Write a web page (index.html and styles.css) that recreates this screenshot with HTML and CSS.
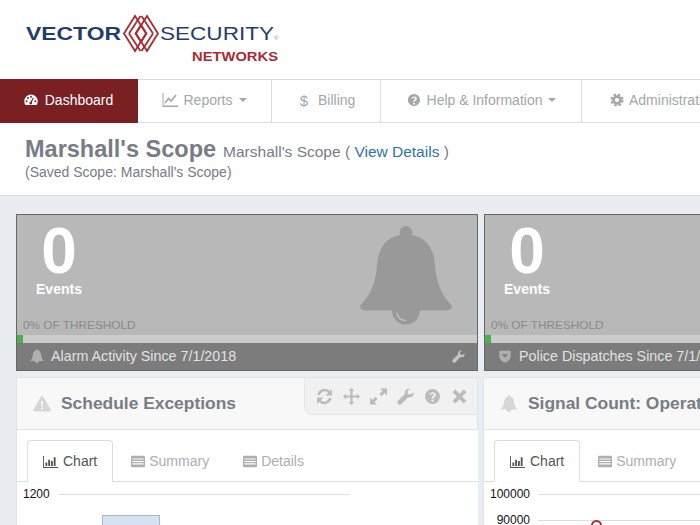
FILE: index.html
```html
<!DOCTYPE html>
<html lang="en">
<head>
  <meta charset="UTF-8" />
  <title>Vector Security Networks</title>
  <link rel="stylesheet" href="styles.css">
</head>
<body>
  <svg class="defs" width="0" height="0">
    <defs>
      <symbol id="i-bell" viewBox="0 0 92 99">
        <circle cx="46" cy="7" r="6.5" />
        <circle cx="46" cy="85" r="14" />
        <path d="M46 9C28 9 18 21 17 40 15 62 8 72 1 79c-2 3 0 6 4 6h82c4 0 6-3 4-6-7-7-14-17-16-39C74 21 64 9 46 9z" />
        <path class="bell-shine" d="M37 87c0 5 4 8 9 8" />
      </symbol>
      <symbol id="i-wrench" viewBox="0 0 16 16">
        <path d="M15.6 4.2c.3 1.900-.4 3.500-2 4.300-1.200.6-2.300.5-3.200.1L4.300 15c-.9.9-2.300.9-3.200 0s-.9-2.300 0-3.200l6.300-6.200c-.4-1.200-.2-2.500.8-3.600C9.300.8 10.800.4 12.200.8L9.700 3.300l.6 2.300 2.400.6 2.900-2z" />
      </symbol>
      <symbol id="i-gauge" viewBox="0 0 16 16">
        <path d="M8 1.800A7.700 7.700 0 0 0 .3 9.500c0 1.600.5 3.100 1.300 4.300h12.800c.8-1.200 1.300-2.700 1.300-4.300A7.700 7.700 0 0 0 8 1.800z" />
        <g class="holes">
          <circle cx="3" cy="9.500" r="1.100" />
          <circle cx="4.500" cy="5.800" r="1.100" />
          <circle cx="8" cy="4.300" r="1.100" />
          <circle cx="13" cy="9.500" r="1.100" />
          <circle cx="7.700" cy="11.500" r="1.500" />
          <path d="M7 11l3-5.500 1.200.6-3 5.500z" />
        </g>
      </symbol>
      <symbol id="i-line" viewBox="0 0 16 14">
        <path d="M.5 0h1v12.500H16V14H.5z" />
        <path d="M3 10l3.500-4.500 2.500 2.500 5-6" fill="none" stroke="currentColor" stroke-width="1.600" />
      </symbol>
      <symbol id="i-help" viewBox="0 0 16 16">
        <path fill-rule="evenodd" d="M8 1a7 7 0 1 0 0 14A7 7 0 0 0 8 1zM7 11h2v2H7zm0-1.200c0-2 2.200-2.200 2.200-3.400 0-.6-.5-1-1.200-1-.7 0-1.200.4-1.500 1L5.100 6.300C5.600 5 6.600 4 8.200 4c1.700 0 3 1 3 2.500 0 2-2.300 2.200-2.300 3.300z" />
      </symbol>
      <symbol id="i-cog" viewBox="0 0 16 16">
        <circle cx="8" cy="8" r="3.900" fill="none" stroke="currentColor" stroke-width="3" />
        <circle cx="8" cy="8" r="6.200" fill="none" stroke="currentColor" stroke-width="2.600" stroke-dasharray="2.900 2" />
      </symbol>
      <symbol id="i-shield" viewBox="0 0 16 16">
        <path fill-rule="evenodd" d="M1.500 2h13v6c0 4-3.500 6.500-6.500 7.500C5 14.500 1.500 12 1.500 8zM4 6l4 3.800L12 6H4z" />
      </symbol>
      <symbol id="i-warn" viewBox="0 0 18 16">
        <path fill-rule="evenodd" d="M9 .5c.5 0 .9.300 1.200.8l7.400 12.800c.5 .9 0 1.900-1.100 1.900H1.500C.4 16-.1 15 .4 14.100L7.800 1.300C8.100.8 8.500.5 9 .5zM8 5.500l.3 5.500h1.400L10 5.500zM8 12v2h2v-2z" />
      </symbol>
      <symbol id="i-refresh" viewBox="0 0 16 16">
        <path d="M2.500 6.500A5.800 5.800 0 0 1 12.600 4" fill="none" stroke="currentColor" stroke-width="2.400" />
        <path d="M15 1v6H9z" />
        <path d="M13.500 9.500A5.800 5.800 0 0 1 3.400 12" fill="none" stroke="currentColor" stroke-width="2.400" />
        <path d="M1 15V9h6z" />
      </symbol>
      <symbol id="i-move" viewBox="0 0 16 16">
        <path d="M8 0l2.600 2.800H9V7h4.200V5.400L16 8l-2.800 2.600V9H9v4.200h1.600L8 16l-2.600-2.800H7V9H2.800v1.600L0 8l2.800-2.600V7H7V2.800H5.400z" />
      </symbol>
      <symbol id="i-expand" viewBox="0 0 16 16">
        <path d="M9.500 .5H16V7l-2.200-2.200-2.900 2.900-2-2 2.900-2.900zM6.500 15.500H0V9l2.200 2.200 2.900-2.900 2 2-2.900 2.900z" />
      </symbol>
      <symbol id="i-close" viewBox="0 0 16 16">
        <path d="M4 1.500l4 4 4-4 2.500 2.500-4 4 4 4-2.500 2.500-4-4-4 4L1.500 12l4-4-4-4z" />
      </symbol>
      <symbol id="i-bars" viewBox="0 0 16 14">
        <path d="M0 1h1v11.800h15V14H0zM2.500 8h2v3.800h-2zM5.500 5h2v6.800h-2zM8.500 6.500h2v5.300h-2zM11.500 2.500h2v9.300h-2z" />
      </symbol>
      <symbol id="i-list" viewBox="0 0 16 14">
        <path fill-rule="evenodd" d="M1.500 .5h13c.8 0 1.500.7 1.500 1.500v10c0 .8-.7 1.500-1.500 1.500h-13C.7 13.500 0 12.800 0 12V2C0 1.200 .7 .5 1.500 .5zM1.500 3.500v1.300h13V3.500zm0 2.800v1.300h13V6.300zm0 2.800v1.300h13V9.100z" />
      </symbol>
    </defs>
  </svg>

  <header class="brand">
    <svg class="logo" width="270" height="60" viewBox="0 0 270 60">
      <text class="logo-vector" x="11" y="30" textLength="95" lengthAdjust="spacingAndGlyphs">VECTOR</text>
      <g class="logo-mark">
        <path d="M109 23.500 L120 6 L131 23.500 L120 41z" />
        <path d="M121 23.500 L132 6 L143 23.500 L132 41z" />
        <path d="M114 23.500 L125.500 6 M114 23.500 L125.500 41 M138 23.500 L126.500 6 M138 23.500 L126.500 41" />
        <path d="M120.500 23.500 L126 15 L131.500 23.500 L126 32z" />
      </g>
      <text class="logo-security" x="145" y="30" textLength="114" lengthAdjust="spacingAndGlyphs">SECURITY</text>
      <text class="logo-reg" x="259" y="30">®</text>
      <text class="logo-networks" x="177" y="51" textLength="86" lengthAdjust="spacingAndGlyphs">NETWORKS</text>
    </svg>
  </header>

  <nav class="topnav">
    <a class="nav-item active nav-dash"><svg class="ico"><use href="#i-gauge" /></svg>Dashboard</a>
    <a class="nav-item nav-reports"><svg class="ico"><use href="#i-line" /></svg>Reports<span class="caret"></span></a>
    <a class="nav-item nav-billing"><span class="dollar">$</span>Billing</a>
    <a class="nav-item nav-help"><svg class="ico"><use href="#i-help" /></svg>Help &amp; Information<span class="caret"></span></a>
    <a class="nav-item nav-admin"><svg class="ico"><use href="#i-cog" /></svg>Administration<span class="caret"></span></a>
  </nav>

  <section class="scope">
    <div class="scope-line">
      <h1>Marshall's Scope</h1>
      <span class="scope-sub">Marshall's Scope ( <a class="link">View Details</a> )</span>
    </div>
    <div class="scope-saved">(Saved Scope: Marshall's Scope)</div>
  </section>

  <main class="content">
    <div class="row stats">
      <div class="stat">
        <svg class="stat-bg"><use href="#i-bell" /></svg>
        <div class="stat-top">
          <div class="stat-num">0</div>
          <div class="stat-label">Events</div>
        </div>
        <div class="stat-threshold">0% OF THRESHOLD</div>
        <div class="progress"><div class="progress-fill"></div></div>
        <div class="stat-foot">
          <svg class="ico-sm"><use href="#i-bell" /></svg>
          <span class="foot-text">Alarm Activity Since 7/1/2018</span>
          <svg class="ico-wrench"><use href="#i-wrench" /></svg>
        </div>
      </div>
      <div class="stat">
        <div class="stat-top">
          <div class="stat-num">0</div>
          <div class="stat-label">Events</div>
        </div>
        <div class="stat-threshold">0% OF THRESHOLD</div>
        <div class="progress"><div class="progress-fill"></div></div>
        <div class="stat-foot">
          <svg class="ico-sm"><use href="#i-shield" /></svg>
          <span class="foot-text">Police Dispatches Since 7/1/2018</span>
        </div>
      </div>
    </div>

    <div class="row widgets">
      <div class="widget">
        <div class="widget-head">
          <svg class="widget-ico"><use href="#i-warn" /></svg>
          <h2>Schedule Exceptions</h2>
          <div class="toolbar">
            <svg class="tool"><use href="#i-refresh" /></svg>
            <svg class="tool"><use href="#i-move" /></svg>
            <svg class="tool"><use href="#i-expand" /></svg>
            <svg class="tool"><use href="#i-wrench" /></svg>
            <svg class="tool"><use href="#i-help" /></svg>
            <svg class="tool"><use href="#i-close" /></svg>
          </div>
        </div>
        <div class="tabs">
          <a class="tab current"><svg class="tab-ico"><use href="#i-bars" /></svg>Chart</a>
          <a class="tab"><svg class="tab-ico"><use href="#i-list" /></svg>Summary</a>
          <a class="tab"><svg class="tab-ico"><use href="#i-list" /></svg>Details</a>
        </div>
        <div class="chart chart-a">
          <div class="tick"><span>1200</span><i></i></div>
          <div class="bar"></div>
        </div>
      </div>

      <div class="widget">
        <div class="widget-head">
          <svg class="widget-ico"><use href="#i-bell" /></svg>
          <h2>Signal Count: Operator Activity</h2>
        </div>
        <div class="tabs">
          <a class="tab current"><svg class="tab-ico"><use href="#i-bars" /></svg>Chart</a>
          <a class="tab"><svg class="tab-ico"><use href="#i-list" /></svg>Summary</a>
          <a class="tab"><svg class="tab-ico"><use href="#i-list" /></svg>Details</a>
        </div>
        <div class="chart chart-b">
          <div class="tick"><span>100000</span><i></i></div>
          <div class="tick"><span>90000</span><i></i></div>
          <div class="point"></div>
        </div>
      </div>
    </div>
  </main>
</body>
</html>
```

FILE: styles.css
```css
html, body {
  margin: 0;
  height: 525px;
  overflow: hidden;
}

body {
  font-family: "Liberation Sans", Arial, sans-serif;
  background: #e9edf2;
  color: #777c85;
  font-size: 14px;
}

.defs {
  position: absolute;
}

.brand {
  height: 79px;
  background: #fff;
  padding-left: 15px;
  padding-top: 10px;
  box-sizing: border-box;
}

.logo {
  display: block;
}

.logo-vector {
  font-size: 18px;
  font-weight: 700;
  fill: #1f3d6d;
}

.logo-security {
  font-size: 18px;
  fill: #1f3d6d;
}

.logo-reg {
  font-size: 6px;
  fill: #8a94a8;
}

.logo-networks {
  font-size: 12px;
  font-weight: 700;
  fill: #ab2a33;
}

.logo-mark path {
  fill: none;
  stroke: #a82d33;
  stroke-width: 1.800;
}

.topnav {
  display: flex;
  height: 44px;
  box-sizing: border-box;
  background: #fff;
  border-top: 1px solid #ddd;
  border-bottom: 1px solid #ddd;
  white-space: nowrap;
}

.nav-item {
  display: flex;
  align-items: center;
  justify-content: center;
  box-sizing: border-box;
  height: 42px;
  padding-bottom: 2px;
  border-right: 1px solid #ddd;
  color: #a3a6ab;
  flex: none;
}

.nav-dash { width: 138px; }
.nav-reports { width: 134px; }
.nav-billing { width: 109px; padding-left: 3px; }
.nav-help { width: 201px; }
.nav-admin {
  width: 200px;
  justify-content: flex-start;
  padding-left: 27px;
  border-right: none;
}

.nav-admin .ico {
  margin-right: 4px;
}

.nav-item.active {
  background: #7a2022;
  color: #fff;
  height: 44px;
  margin-top: -1px;
  margin-bottom: -1px;
  padding-right: 2px;
  border-right: none;
}

.ico {
  width: 16px;
  height: 14px;
  margin-right: 5px;
  fill: currentColor;
}

.nav-dash .ico {
  margin-right: 6px;
}

.holes {
  fill: #7a2022;
}

.dollar {
  margin-right: 10px;
  font-size: 15px;
}

.caret {
  width: 0;
  height: 0;
  margin-left: 6px;
  border-top: 4px solid #a3a6ab;
  border-left: 4px solid transparent;
  border-right: 4px solid transparent;
}

.scope {
  height: 73px;
  box-sizing: border-box;
  background: #fff;
  border-bottom: 1px solid #ddd;
  padding: 12px 25px 0;
}

.scope-line {
  display: flex;
  align-items: baseline;
  gap: 7px;
}

h1 {
  margin: 0;
  font-size: 23.500px;
  line-height: 29px;
  font-weight: 700;
  color: #777c85;
}

.scope-sub {
  font-size: 15.500px;
}

.link {
  color: #2f72b5;
}

.scope-saved {
  font-size: 14px;
  line-height: 16px;
}

.content {
  padding: 18px 16px 0;
}

.row {
  display: grid;
  grid-template-columns: 462px 462px;
  gap: 6px;
}

.stat {
  position: relative;
  display: flex;
  flex-direction: column;
  height: 157px;
  box-sizing: border-box;
  background: #b8b8b8;
  border: 1px solid #666;
}

.stat-bg {
  position: absolute;
  top: 10px;
  right: 25px;
  width: 92px;
  height: 100px;
  fill: #999;
}

.bell-shine {
  fill: none;
  stroke: #bdbdbd;
  stroke-width: 1.500;
}

.stat-top {
  flex: 1;
  width: 84px;
  text-align: center;
}

.stat-num {
  margin-top: 6px;
  font-size: 64px;
  line-height: 60px;
  font-weight: 700;
  color: #fff;
}

.stat-label {
  font-size: 14px;
  font-weight: 700;
  line-height: 16px;
  color: #fff;
}

.stat-threshold {
  padding-left: 6px;
  font-size: 11.800px;
  line-height: 14px;
  margin-bottom: 3px;
  color: #8a8a8a;
}

.progress {
  height: 8px;
  background: #cbcbca;
}

.progress-fill {
  width: 6px;
  height: 100%;
  background: #4cb050;
}

.stat-foot {
  display: flex;
  align-items: center;
  height: 27px;
  padding: 0 12px 1px 13px;
  box-sizing: border-box;
  background: #7c7c7c;
  color: #e2e2e2;
  font-size: 14.300px;
  white-space: nowrap;
}

.ico-sm {
  width: 14px;
  height: 14px;
  margin-right: 7px;
  fill: #b0b0b0;
  flex: none;
}

.foot-text {
  flex: 1;
}

.ico-wrench {
  width: 13px;
  height: 13px;
  fill: #c4c4c4;
  flex: none;
}

.widgets {
  margin-top: 6px;
}

.widget {
  background: #fff;
  border-left: 1px solid #e3e3e3;
  height: 160px;
}

.widget:last-child {
  margin-left: -1px;
}

.widget-head {
  position: relative;
  display: flex;
  align-items: center;
  height: 53px;
  box-sizing: border-box;
  background: #f8f8f8;
  border: 1px solid #e3e3e3;
  border-left: none;
  padding-left: 16px;
  white-space: nowrap;
}

.widget-ico {
  width: 18px;
  height: 17px;
  margin-right: 10px;
  fill: #d6d6d6;
  flex: none;
}

h2 {
  margin: 0;
  font-size: 17.400px;
  font-weight: 700;
  color: #777c85;
}

.toolbar {
  position: absolute;
  top: 0;
  right: 0;
  display: flex;
  align-items: center;
  gap: 10px;
  height: 36px;
  padding: 0 9px 0 11px;
  background: #f1f1f1;
  border-bottom: 1px solid #e3e3e3;
  border-bottom-left-radius: 8px;
  border-left: 1px solid #e8e8e8;
}

.tool {
  width: 17px;
  height: 17px;
  fill: #bbb;
  color: #bbb;
}

.tabs {
  display: flex;
  height: 52px;
  box-sizing: border-box;
  padding: 10px 0 0 10px;
  border-bottom: 1px solid #ddd;
}

.tab {
  display: flex;
  align-items: center;
  height: 42px;
  box-sizing: border-box;
  padding: 0 15px;
  border: 1px solid transparent;
  color: #aeaeae;
  flex: none;
}

.tab.current {
  color: #555;
  background: #fff;
  border-color: #ddd;
  border-bottom-color: #fff;
  border-radius: 4px 4px 0 0;
}

.tab-ico {
  width: 14px;
  height: 13px;
  margin-right: 4px;
  fill: currentColor;
}

.tab.current .tab-ico {
  width: 15px;
  margin-right: 5px;
}

.tab + .tab {
  margin-left: 2px;
}

.chart {
  position: relative;
  padding-top: 4px;
  font-size: 12px;
  color: #111;
}

.tick {
  display: flex;
  align-items: center;
  height: 16px;
  gap: 9px;
  width: 327px;
}

.tick span {
  flex: none;
}

.tick i {
  flex: 1;
  height: 1px;
  background: #ddd;
}

.chart-a {
  padding-left: 6px;
}

.chart-b {
  padding-left: 4px;
}

.chart-b .tick {
  width: 400px;
  gap: 8px;
}

.chart-b .tick + .tick {
  margin-top: 10px;
}

.chart-b .tick span {
  width: 42px;
  text-align: right;
}

.bar {
  width: 58px;
  height: 40px;
  margin: 13px 0 0 79px;
  background: #d5e2f2;
  border: 1px solid #a9b9cd;
  box-sizing: border-box;
}

.point {
  position: absolute;
  top: 38px;
  left: 107px;
  width: 11px;
  height: 11px;
  box-sizing: border-box;
  border: 2px solid #ab2a33;
  border-radius: 50%;
  background: #fff;
}
```
